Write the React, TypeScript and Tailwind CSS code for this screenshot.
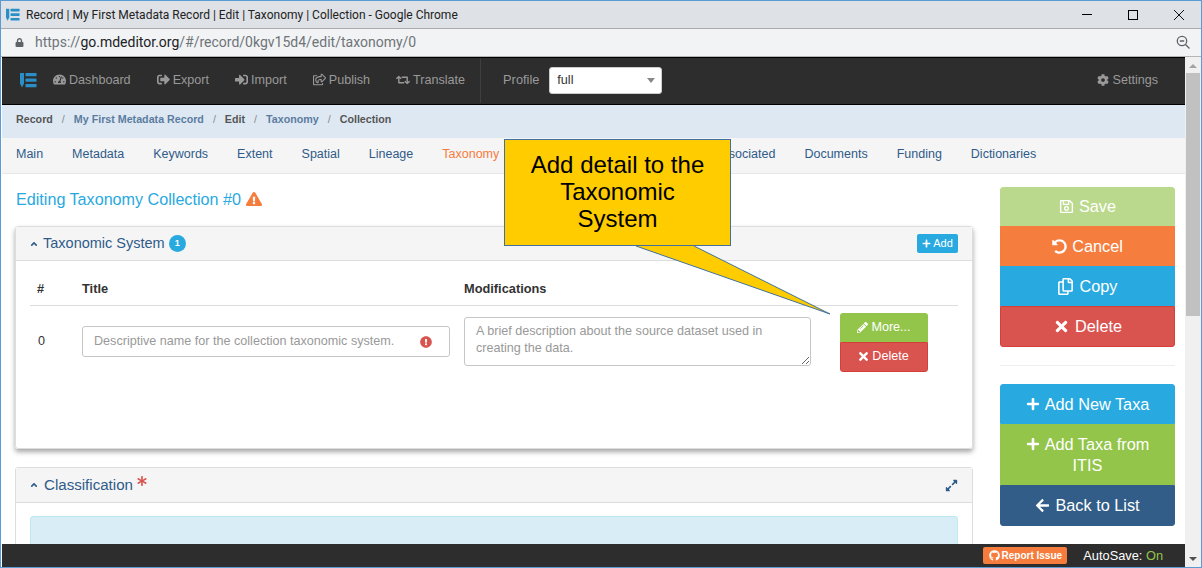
import { ReactNode } from 'react'
import {
    FaAngleUp,
    FaArrowLeft,
    FaAsterisk,
    FaCog,
    FaExclamationCircle,
    FaExclamationTriangle,
    FaExpandAlt,
    FaGithub,
    FaLock,
    FaPencilAlt,
    FaPlus,
    FaRegCopy,
    FaRegSave,
    FaRegShareSquare,
    FaRetweet,
    FaSignInAlt,
    FaSignOutAlt,
    FaTachometerAlt,
    FaTimes,
    FaUndoAlt,
} from 'react-icons/fa'

function Logo({ className }: { className: string }) {
    return (
        <svg viewBox="0 0 17 17" className={className} fill="#2a8fc7">
            <path d="M0 1h4v10.500l-2 4-2-4z" />
            <rect x="5.500" y="1" width="11" height="3.200" rx="0.500" />
            <rect x="5.500" y="6.500" width="11" height="3.200" rx="0.500" />
            <rect x="5.500" y="12" width="11" height="3.200" rx="0.500" />
        </svg>
    )
}

function NavItem({ icon, label }: { icon: ReactNode; label: string }) {
    return (
        <a className="flex items-center gap-[3px] text-[12.6px] text-[#999999]">
            {icon}
            {label}
        </a>
    )
}

function SideButton({ className, children }: { className: string; children: ReactNode }) {
    return (
        <button className={`flex w-full items-center justify-center gap-[5px] border text-center text-[16.3px] leading-[21px] text-white ${className}`}>
            {children}
        </button>
    )
}

const tabsBefore = ['Main', 'Metadata', 'Keywords', 'Extent', 'Spatial', 'Lineage']
const tabsAfter = ['Associated', 'Documents', 'Funding', 'Dictionaries']

export default function App() {
    return (
        <div className="relative flex h-[568px] w-[1202px] flex-col overflow-hidden border border-[#5b9bd5] bg-white font-['Liberation_Sans',sans-serif]">
            {/* chrome window title */}
            <div className="flex h-[28px] shrink-0 items-center border-b border-[#a9abae] bg-[#dee1e6] pl-[5px]">
                <Logo className="h-[14px] w-[14px]" />
                <span className="ml-[6px] font-['Roboto',sans-serif] text-[12px] text-[#222222]">
                    Record | My First Metadata Record | Edit | Taxonomy | Collection - Google Chrome
                </span>
                <div className="ml-auto flex items-center gap-[36px] pr-[17px]">
                    <div className="h-px w-[10px] bg-black" />
                    <div className="h-[10px] w-[10px] border border-black" />
                    <svg viewBox="0 0 10 10" className="h-[10px] w-[10px]" stroke="#111111" fill="none">
                        <path d="M0 0l10 10M10 0L0 10" />
                    </svg>
                </div>
            </div>

            {/* address bar */}
            <div className="flex h-[28px] shrink-0 items-center border-b border-[#b4b5b7] bg-[#f1f3f4] pb-px pl-[14px] pr-[11px]">
                <FaLock className="h-[9px] w-[9px] text-[#5f6368]" />
                <span className="ml-[11px] font-['Roboto',sans-serif] text-[14px] text-[#6f7479]">
                    https://<span className="text-[#202124]">go.mdeditor.org</span>/#/record/0kgv15d4/edit/taxonomy/0
                </span>
                <svg viewBox="0 0 14 14" className="ml-auto h-[14px] w-[14px]" stroke="#5f6368" fill="none" strokeWidth="1.300">
                    <circle cx="6" cy="6" r="4.700" />
                    <path d="M3.800 6h4.400M9.500 9.500L13.500 13.500" />
                </svg>
            </div>

            <div className="flex min-h-0 flex-1">
                <div className="relative flex min-w-0 flex-1 flex-col overflow-hidden pl-px">
                    {/* top nav */}
                    <nav className="flex h-[48px] shrink-0 items-center border-y border-black bg-[#2d2d2d] pb-[2px] pl-[18px] pr-[27px]">
                        <Logo className="h-[17px] w-[17px]" />
                        <div className="ml-[16px] flex items-center gap-[26px]">
                            <NavItem icon={<FaTachometerAlt className="h-[13px] w-[13px]" />} label="Dashboard" />
                            <NavItem icon={<FaSignOutAlt className="h-[13px] w-[13px]" />} label="Export" />
                            <NavItem icon={<FaSignInAlt className="h-[13px] w-[13px]" />} label="Import" />
                            <NavItem icon={<FaRegShareSquare className="h-[13px] w-[13px]" />} label="Publish" />
                            <NavItem icon={<FaRetweet className="h-[14px] w-[14px]" />} label="Translate" />
                        </div>
                        <div className="ml-[15px] -mb-[2px] h-full border-l border-[#3f3f3f]" />
                        <span className="ml-[22px] text-[12.8px] text-[#999999]">Profile</span>
                        <div className="relative ml-[10px] flex h-[27px] w-[113px] items-center rounded-[3px] border border-[#cccccc] bg-white pl-[7px] text-[12.6px] text-[#333333]">
                            full
                            <div className="absolute right-[6px] top-[10px] h-0 w-0 border-x-[4px] border-t-[5px] border-x-transparent border-t-[#888888]" />
                        </div>
                        <div className="ml-auto">
                            <NavItem icon={<FaCog className="h-[12px] w-[12px]" />} label="Settings" />
                        </div>
                    </nav>

                    {/* breadcrumb */}
                    <div className="flex h-[33px] shrink-0 items-center gap-[9px] bg-[#dee8f3] pb-[4px] pl-[14px] text-[10.7px] font-bold text-[#555555]">
                        <span>Record</span>
                        <span className="font-normal text-[#888888]">/</span>
                        <span className="text-[#5b7c9f]">My First Metadata Record</span>
                        <span className="font-normal text-[#888888]">/</span>
                        <span>Edit</span>
                        <span className="font-normal text-[#888888]">/</span>
                        <span className="text-[#5b7c9f]">Taxonomy</span>
                        <span className="font-normal text-[#888888]">/</span>
                        <span>Collection</span>
                    </div>

                    {/* tabs */}
                    <div className="flex h-[36px] shrink-0 items-center gap-[29px] border-b border-[#e7e7e7] bg-[#f5f5f5] pb-[3px] pl-[14px] text-[12.5px] text-[#2f5b8a]">
                        {tabsBefore.map((t) => (
                            <a key={t}>{t}</a>
                        ))}
                        <a className="text-[#f57c3c]">Taxonomy</a>
                        <div className="w-[157px]" />
                        {tabsAfter.map((t) => (
                            <a key={t}>{t}</a>
                        ))}
                    </div>

                    {/* content */}
                    <div className="flex min-h-0 flex-1 gap-[27px] pl-[13px] pt-[13px]">
                        <div className="w-[958px] shrink-0">
                            <h3 className="flex h-[26px] items-center gap-[5px] pb-[2px] pl-px text-[16.15px] text-[#28a9e0]">
                                Editing Taxonomy Collection #0
                                <FaExclamationTriangle className="h-[16px] w-[16px] text-[#f57c3c]" />
                            </h3>

                            <div className="mt-[13px] h-[223px] rounded-[3px] border border-[#dddddd] shadow-[0_3px_5px_rgba(0,0,0,0.35)]">
                                <div className="flex h-[34px] items-center border-b border-[#dddddd] bg-[#f5f5f5] pl-[14px] pr-[14px]">
                                    <FaAngleUp className="-ml-px h-[10px] w-[10px] text-[#2f5b8a]" />
                                    <span className="ml-[4px] text-[14.5px] text-[#2f5b8a]">Taxonomic System</span>
                                    <span className="ml-[4px] flex h-[17px] w-[17px] items-center justify-center rounded-full bg-[#28a9e0] text-[9px] font-bold text-white">1</span>
                                    <button className="ml-auto flex h-[19px] w-[41px] items-center justify-center gap-[2px] rounded-[2px] bg-[#28a9e0] text-[11px] text-white">
                                        <FaPlus className="h-[9px] w-[9px]" />
                                        Add
                                    </button>
                                </div>
                                <div className="px-[14px]">
                                    <div className="flex h-[45px] items-center border-b border-[#dddddd] pt-[12px] text-[12.8px] font-bold text-[#333333]">
                                        <span className="ml-[7px] w-[45px]">#</span>
                                        <span className="w-[382px]">Title</span>
                                        <span>Modifications</span>
                                    </div>
                                    <div className="flex pt-[7px]">
                                        <span className="ml-[8px] mt-[19px] w-[44px] text-[12.6px] text-[#333333]">0</span>
                                        <div className="mt-[13px] flex h-[31px] w-[368px] items-center justify-between rounded-[3px] border border-[#c6c6c6] pl-[11px] pr-[17px] text-[12.6px] text-[#999999]">
                                            Descriptive name for the collection taxonomic system.
                                            <FaExclamationCircle className="h-[12px] w-[12px] text-[#d9534f]" />
                                        </div>
                                        <textarea
                                            readOnly
                                            placeholder="A brief description about the source dataset used in creating the data."
                                            className="ml-[14px] mt-[4px] h-[49px] w-[347px] rounded-[3px] border border-[#c6c6c6] px-[11px] pb-[5px] pt-[5px] text-[12.6px] leading-[17px] placeholder:text-[#999999]"
                                        />
                                        <div className="ml-[29px] w-[88px]">
                                            <button className="flex h-[29px] w-full items-center justify-center gap-[3px] rounded-t-[3px] bg-[#93c54b] text-[12.6px] text-white">
                                                <FaPencilAlt className="h-[11px] w-[11px]" />
                                                More...
                                            </button>
                                            <button className="flex h-[30px] w-full items-center justify-center gap-[2px] rounded-b-[3px] border border-[#d43f3a] bg-[#d9534f] pb-[2px] pr-[2px] text-[12.6px] text-white">
                                                <FaTimes className="h-[13px] w-[13px]" />
                                                Delete
                                            </button>
                                        </div>
                                    </div>
                                </div>
                            </div>

                            <div className="mt-[18px] h-[120px] rounded-t-[3px] border border-[#dddddd]">
                                <div className="flex h-[35px] items-center border-b border-[#dddddd] bg-[#f5f5f5] px-[14px]">
                                    <FaAngleUp className="-ml-px h-[10px] w-[10px] text-[#2f5b8a]" />
                                    <span className="ml-[5px] text-[15.1px] text-[#2f5b8a]">Classification</span>
                                    <FaAsterisk className="mb-[9px] ml-[4px] h-[10px] w-[10px] text-[#d9534f]" />
                                    <FaExpandAlt className="ml-auto h-[13px] w-[13px] text-[#2f5b8a]" />
                                </div>
                                <div className="mx-[14px] mt-[13px] h-[60px] rounded-[3px] border border-[#bce8f1] bg-[#d9edf7]" />
                            </div>
                        </div>

                        <div className="w-[175px] shrink-0">
                            <SideButton className="h-[39px] rounded-t-[3px] border-[#bbd98c] bg-[#bbd98c]">
                                <FaRegSave className="h-[15px] w-[15px]" />
                                Save
                            </SideButton>
                            <SideButton className="h-[40px] border-[#f57c3c] bg-[#f57e3e]">
                                <FaUndoAlt className="h-[15px] w-[15px]" />
                                Cancel
                            </SideButton>
                            <SideButton className="h-[40px] border-[#28a9e0] bg-[#28a9e0]">
                                <FaRegCopy className="h-[17px] w-[17px]" />
                                Copy
                            </SideButton>
                            <SideButton className="h-[41px] gap-[3px] rounded-b-[3px] border-[#d43f3a] bg-[#d9534f]">
                                <FaTimes className="h-[17px] w-[17px]" />
                                Delete
                            </SideButton>
                            <div className="mb-[18px] mt-[18px] border-t border-[#eeeeee]" />
                            <SideButton className="h-[40px] rounded-t-[3px] border-[#28a9e0] bg-[#28a9e0]">
                                <FaPlus className="h-[14px] w-[14px]" />
                                Add New Taxa
                            </SideButton>
                            <button className="block h-[61px] w-full border border-[#93c54b] bg-[#93c54b] px-[16px] text-center text-[16.3px] leading-[21px] text-white">
                                <FaPlus className="mr-[5px] inline h-[14px] w-[14px] align-[-1px]" />
                                Add Taxa from ITIS
                            </button>
                            <SideButton className="h-[41px] rounded-b-[3px] border-[#325d88] bg-[#325d88]">
                                <FaArrowLeft className="h-[15px] w-[15px]" />
                                Back to List
                            </SideButton>
                        </div>
                    </div>

                    {/* footer */}
                    <div className="absolute bottom-0 left-px right-0 flex h-[23px] items-center justify-end bg-[#2d2d2d] pr-[22px]">
                        <button className="flex h-[17px] w-[84px] items-center justify-center gap-[2px] rounded-[2px] bg-[#f57c3c] text-[10px] font-bold text-white">
                            <FaGithub className="h-[11px] w-[11px]" />
                            Report Issue
                        </button>
                        <span className="ml-[16px] text-[12.8px] text-white">
                            AutoSave: <span className="text-[#93c54b]">On</span>
                        </span>
                    </div>
                </div>

                {/* scrollbar */}
                <div className="flex w-[16px] shrink-0 flex-col items-center bg-[#f0f0f0]">
                    <div className="mt-[7px] h-0 w-0 border-x-[4px] border-b-[4px] border-x-transparent border-b-[#a3a3a3]" />
                    <div className="mt-[5px] h-[243px] w-[14px] bg-[#c1c1c1]" />
                    <div className="mb-[6px] mt-auto h-0 w-0 border-x-[4px] border-t-[4px] border-x-transparent border-t-[#505050]" />
                </div>
            </div>

            {/* annotation callout */}
            <svg viewBox="0 0 340 190" className="absolute left-[500px] top-[135px] h-[190px] w-[340px]">
                <path d="M135 110L329 178 193 110" fill="#ffcc00" stroke="#41719c" />
            </svg>
            <div className="absolute left-[503px] top-[138px] flex h-[107px] w-[227px] items-center justify-center border border-[#41719c] bg-[#ffcc00] px-[20px] pb-[2px] text-center text-[24px] leading-[27px] text-black">
                Add detail to the Taxonomic System
            </div>
        </div>
    )
}
